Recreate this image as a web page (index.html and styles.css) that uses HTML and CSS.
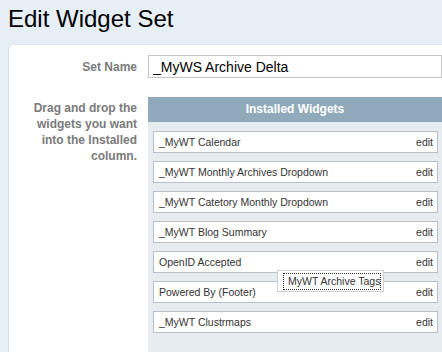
FILE: index.html
```html
<!DOCTYPE html>
<html lang="en">
<head>
    <meta charset="UTF-8">
    <title>Edit Widget Set</title>
    <link rel="stylesheet" href="styles.css">
</head>
<body>
    <h1 class="page-title">Edit Widget Set</h1>

    <div class="panel">
        <label class="field-label" for="setName">Set Name</label>
        <input type="text" id="setName" class="name-input" value="_MyWS Archive Delta">

        <div class="field-label help">Drag and drop the<br>widgets you want<br>into the Installed<br>column.</div>
        <div class="widget-column">
            <div class="column-head">Installed Widgets</div>
            <ul class="widget-list">
                <li class="widget"><span>_MyWT Calendar</span><a class="edit">edit</a></li>
                <li class="widget"><span>_MyWT Monthly Archives Dropdown</span><a class="edit">edit</a></li>
                <li class="widget"><span>_MyWT Catetory Monthly Dropdown</span><a class="edit">edit</a></li>
                <li class="widget"><span>_MyWT Blog Summary</span><a class="edit">edit</a></li>
                <li class="widget"><span>OpenID Accepted</span><a class="edit">edit</a></li>
                <li class="widget"><span>Powered By (Footer)</span><a class="edit">edit</a></li>
                <li class="widget"><span>_MyWT Clustrmaps</span><a class="edit">edit</a></li>
            </ul>
            <!-- item being dragged -->
            <div class="drag-helper"><span class="drag-text">MyWT Archive Tags</span></div>
        </div>
    </div>
</body>
</html>
```

FILE: styles.css
```css
body {
    margin: 0;
    background: #e6eef6;
    font-family: "Liberation Sans", Arial, sans-serif;
    overflow: hidden;
}
.page-title {
    margin: 0;
    padding: 5px 0 0 8px;
    height: 44px;
    box-sizing: border-box;
    font-size: 24px;
    line-height: 28px;
    font-weight: normal;
    color: #000;
}
.panel {
    margin-left: 8px;
    width: 434px;
    height: 308px;
    box-sizing: border-box;
    overflow: hidden;
    background: #fff;
    border-left: 1px solid #d7dfe8;
    border-top: 1px solid #e0e7ef;
    border-radius: 6px 0 0 0;
    padding-top: 10px;
    display: grid;
    grid-template-columns: 128px 294px;
    grid-template-rows: 23px 1fr;
    column-gap: 11px;
    row-gap: 19px;
}
.field-label {
    font-size: 12px;
    font-weight: bold;
    color: #7a7a7a;
    text-align: right;
    align-self: center;
}
.field-label.help {
    align-self: start;
    line-height: 16px;
    padding-top: 3px;
}
.name-input {
    margin: 0;
    width: 294px;
    height: 23px;
    box-sizing: border-box;
    border: 1px solid #c6c6c6;
    padding: 0 4px;
    font-family: "Liberation Sans", Arial, sans-serif;
    font-size: 14px;
    color: #000;
}
.widget-column {
    position: relative;
    background: #e7ecf1;
}
.column-head {
    height: 25px;
    line-height: 25px;
    background: #91aabb;
    color: #fff;
    font-size: 12px;
    font-weight: bold;
    text-align: center;
}
.widget-list {
    list-style: none;
    margin: 0;
    padding: 9px 0 0 5px;
    display: flex;
    flex-direction: column;
    gap: 8px;
}
.widget {
    width: 285px;
    height: 22px;
    box-sizing: border-box;
    background: #fff;
    border: 1px solid #b7bfca;
    display: flex;
    justify-content: space-between;
    align-items: center;
    padding: 0 4px 0 5px;
    font-size: 10.5px;
    color: #333;
}
.edit {
    color: #333;
}
.drag-helper {
    position: absolute;
    left: 129px;
    top: 173px;
    height: 22px;
    box-sizing: border-box;
    background: #fff;
    border: 1px solid #d0d0d0;
    padding: 2px 2px 0 5px;
    white-space: nowrap;
    font-size: 10.5px;
    color: #333;
}
.drag-text {
    display: inline-block;
    height: 17px;
    line-height: 17px;
    box-sizing: border-box;
    padding: 0 1px 0 5px;
    outline: 1px dotted #333;
    outline-offset: -1px;
}
```
